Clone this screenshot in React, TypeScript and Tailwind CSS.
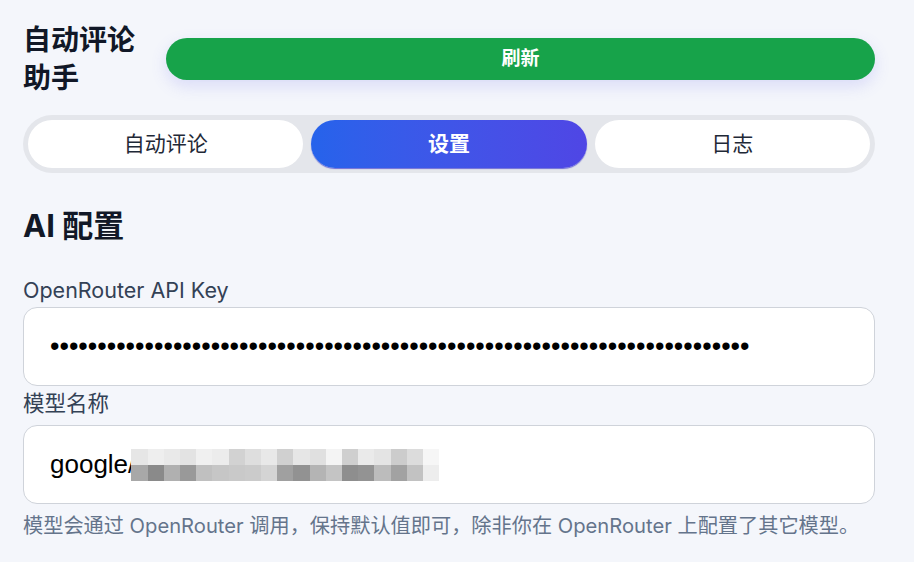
import React from "react";

const font = { fontFamily: 'Inter, "Noto Sans CJK SC", sans-serif' };

export default function App() {
  const dots = "a".repeat(74);
  return (
    <div
      className="min-h-[562px] w-full bg-[#f4f6fb] pl-[23px] pr-[39px] pt-[21px] pb-4 text-[#111827]"
      style={font}
    >
      <div className="flex items-start gap-[23px]">
        <h1 className="w-[120px] text-[28px] font-bold leading-[38px] text-[#111827]">
          自动评论助手
        </h1>
        <button className="mt-[17px] flex h-[42px] flex-1 items-center justify-center rounded-full bg-[#17a34a] text-[19px] font-bold text-white shadow-[0_6px_16px_rgba(99,102,241,0.18)]">
          刷新
        </button>
      </div>

      <div className="mt-[18px] grid h-[58px] grid-cols-3 gap-[8px] rounded-full bg-[#e4e6eb] p-[5px]">
        <button className="rounded-full bg-white text-[21px] font-normal text-[#1f2937]">
          自动评论
        </button>
        <button className="rounded-full bg-gradient-to-r from-[#2563eb] to-[#4f46e5] text-[21px] font-bold text-white shadow-[0_1px_1px_rgba(30,27,200,0.6)]">
          设置
        </button>
        <button className="rounded-full bg-white text-[21px] font-normal text-[#1f2937]">
          日志
        </button>
      </div>

      <h2 className="mt-[33px] text-[31px] font-bold leading-[40px] text-[#111827]">
        AI 配置
      </h2>

      <label className="mt-[30px] mb-[3px] block text-[21.5px] leading-[28px] text-[#334155]">
        OpenRouter API Key
      </label>
      <input
        type="password"
        readOnly
        value={dots}
        className="block h-[79px] w-full rounded-[14px] border border-[#cfd3da] bg-white px-[26px] text-[27px] text-black outline-none"
        style={{ fontFamily: '"Liberation Sans", Arial, sans-serif' }}
      />

      <label className="mt-[3px] mb-[8px] block text-[21.5px] leading-[28px] text-[#334155]">
        模型名称
      </label>
      <div className="flex h-[79px] w-full items-center rounded-[14px] border border-[#cfd3da] bg-white px-[26px]">
        <span
          className="text-[26px] text-black"
          style={{ fontFamily: '"Liberation Sans", Arial, sans-serif' }}
        >
          google/
        </span>
        <div className="ml-[-4px] grid h-[32px] w-[308px] grid-cols-[repeat(19,1fr)] grid-rows-2 blur-[0.6px]">
          {[
            "#e6e6e6","#eeeeee","#e9e9e9","#e3e3e3","#f0f0f0","#ececec","#d2d2d2","#dedede","#e8e8e8","#d0d0d0","#e6e6e6","#e0e0e0","#f4f4f4","#cfcfcf","#eaeaea","#e4e4e4","#cccccc","#dcdcdc","#f6f6f6",
            "#a8a8a8","#8a8a8a","#b0b0b0","#999999","#c0c0c0","#c6c6c6","#c9c9c9","#cbcbcb","#d4d4d4","#a0a0a0","#929292","#b4b4b4","#c4c4c4","#8e8e8e","#939393","#bcbcbc","#a2a2a2","#c2c2c2","#ededed",
          ].map((c, i) => (
            <div key={i} style={{ backgroundColor: c }} />
          ))}
        </div>
      </div>

      <p className="mt-[9px] text-[20.2px] leading-[26px] text-[#64748b]">
        模型会通过 OpenRouter 调用，保持默认值即可，除非你在 OpenRouter 上配置了其它模型。
      </p>
    </div>
  );
}
